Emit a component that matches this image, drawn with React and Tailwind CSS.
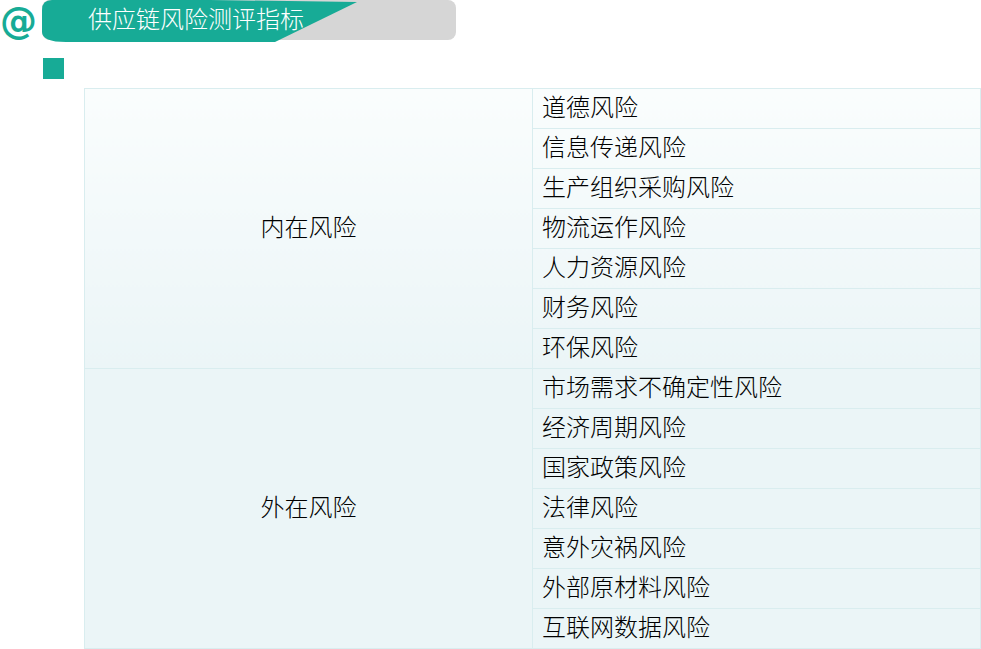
const groups = [
  {
    name: '内在风险',
    items: ['道德风险', '信息传递风险', '生产组织采购风险', '物流运作风险', '人力资源风险', '财务风险', '环保风险'],
  },
  {
    name: '外在风险',
    items: ['市场需求不确定性风险', '经济周期风险', '国家政策风险', '法律风险', '意外灾祸风险', '外部原材料风险', '互联网数据风险'],
  },
];

const cjk = "font-['Noto_Sans_CJK_SC','Liberation_Serif',serif]";

const App = () => {
  return (
    <div className={`w-[981px] h-[649px] bg-white overflow-hidden ${cjk}`}>
      {/* Title ribbon */}
      <div className="flex h-[42px]">
        <span className="w-[42px] h-[42px] text-[#17ab96] text-[37px] leading-[42px] font-bold font-['DejaVu_Sans',sans-serif]">
          @
        </span>
        <div className="relative w-[414px] h-[40px] bg-[#d6d6d6] rounded-[8px]">
          <svg className="absolute left-0 top-0" width="320" height="42" viewBox="0 0 320 42">
            <path d="M0 10 Q0 0 10 0 L168 0 L315 2 L233 42 L24 42 Q0 42 0 32 Z" fill="#17ab96" />
          </svg>
          <span className="absolute left-[46px] top-[4px] text-white text-[24px] leading-[28px] font-light whitespace-nowrap">
            供应链风险测评指标
          </span>
        </div>
      </div>

      {/* Section marker */}
      <div className="w-[21px] h-[21px] bg-[#17ab96] ml-[43px] mt-[16px]"></div>

      {/* Indicators table */}
      <table className="ml-[84px] mt-[9px] w-[897px] h-[561px] border-collapse table-fixed text-[24px] font-light text-black bg-[linear-gradient(180deg,#fafdfd_0%,#ebf5f7_50%,#ebf5f7_100%)]">
        <tbody>
          {groups.map(group =>
            group.items.map((item, i) => (
              <tr key={item} className="h-[40px]">
                {i === 0 && (
                  <td rowSpan={group.items.length} className="w-[448px] border border-[#d9edef] text-center align-middle pb-[6px]">
                    {group.name}
                  </td>
                )}
                <td className="border border-[#d9edef] pl-[9px] pb-[6px] align-middle leading-[28px]">{item}</td>
              </tr>
            ))
          )}
        </tbody>
      </table>
    </div>
  );
};

export default App;
